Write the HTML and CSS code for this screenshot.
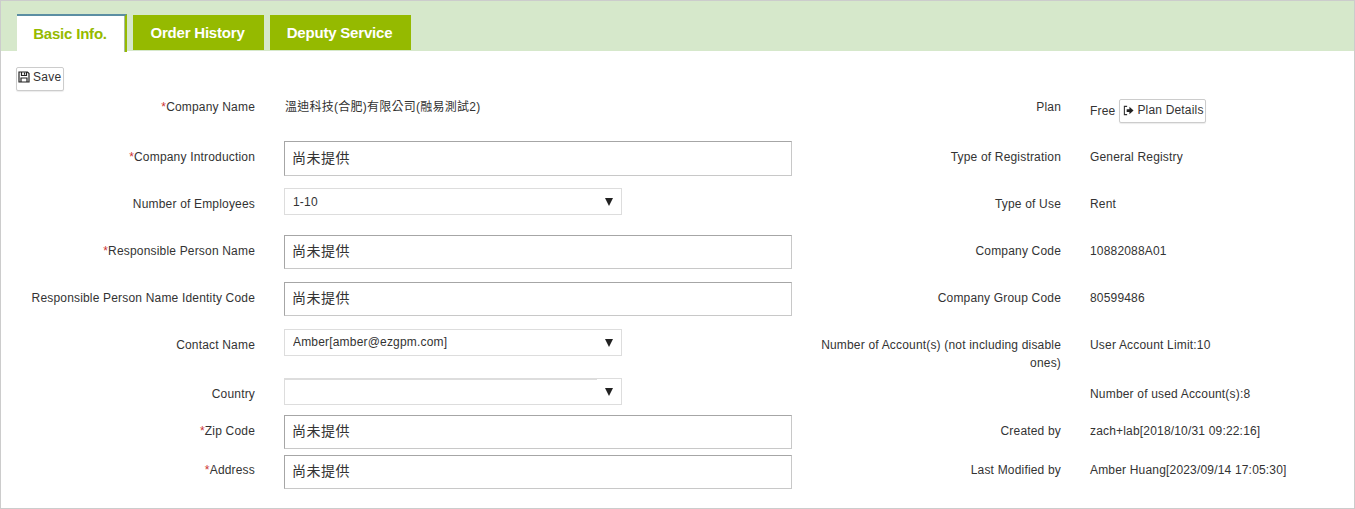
FILE: index.html
```html
<!DOCTYPE html>
<html lang="en">
<head>
<meta charset="utf-8">
<title>Basic Info.</title>
<link rel="stylesheet" href="styles.css">
</head>
<body>
<div class="page">
  <nav class="tabs">
    <a class="tab active">Basic Info.</a>
    <a class="tab tab-order">Order History</a>
    <a class="tab tab-deputy">Deputy Service</a>
  </nav>
  <div class="toolbar">
    <button class="btn save" type="button">
      <svg class="ico" viewBox="0 0 12 12" width="12" height="12"><path d="M1 1h8.500L11 2.500V11H1z M3.500 1v3.500h5V1 M6.500 1.800v2 M3 11V7h6v4" fill="none" stroke="#222" stroke-width="1.200"/></svg>
      Save
    </button>
  </div>
  <form class="form">
    <div class="lbl"><i>*</i>Company Name</div>
    <div class="val cjk-val">溫迪科技(合肥)有限公司(融易測試2)</div>
    <div class="lbl">Plan</div>
    <div class="val plan"><span>Free</span>
      <button class="btn details" type="button">
        <svg class="ico" viewBox="0 0 12 12" width="11" height="11"><path d="M4.500 1.500H1.500v9h3" fill="none" stroke="#333" stroke-width="1.200"/><path d="M4 4.500h3V2l4.500 4L7 10V7.500H4z" fill="#222"/></svg>
        Plan Details
      </button>
    </div>

    <div class="lbl"><i>*</i>Company Introduction</div>
    <div class="ctl"><input class="txt tall" value="尚未提供"></div>
    <div class="lbl">Type of Registration</div>
    <div class="val">General Registry</div>

    <div class="lbl">Number of Employees</div>
    <div class="ctl sel"><select class="sel-num"><option>1-10</option></select></div>
    <div class="lbl">Type of Use</div>
    <div class="val">Rent</div>

    <div class="lbl"><i>*</i>Responsible Person Name</div>
    <div class="ctl"><input class="txt" value="尚未提供"></div>
    <div class="lbl">Company Code</div>
    <div class="val">10882088A01</div>

    <div class="lbl">Responsible Person Name Identity Code</div>
    <div class="ctl"><input class="txt" value="尚未提供"></div>
    <div class="lbl">Company Group Code</div>
    <div class="val">80599486</div>

    <div class="lbl">Contact Name</div>
    <div class="ctl sel"><select><option>Amber[amber@ezgpm.com]</option></select></div>
    <div class="lbl">Number of Account(s) (not including disable ones)</div>
    <div class="val">User Account Limit:10</div>

    <div class="lbl">Country</div>
    <div class="ctl sel sel-empty"><select><option></option></select></div>
    <div class="lbl"></div>
    <div class="val">Number of used Account(s):8</div>

    <div class="lbl"><i>*</i>Zip Code</div>
    <div class="ctl"><input class="txt" value="尚未提供"></div>
    <div class="lbl">Created by</div>
    <div class="val">zach+lab[2018/10/31 09:22:16]</div>

    <div class="lbl last"><i>*</i>Address</div>
    <div class="ctl"><input class="txt" value="尚未提供"></div>
    <div class="lbl last">Last Modified by</div>
    <div class="val last">Amber Huang[2023/09/14 17:05:30]</div>
  </form>
</div>
</body>
</html>
```
FILE: styles.css
```css
* { box-sizing: border-box; }
html, body { margin: 0; padding: 0; background: #fff; }
body {
  font-family: "Liberation Sans", "Noto Sans CJK TC", sans-serif;
  font-size: 12px;
  line-height: 18px;
  letter-spacing: 0.18px;
  color: #333;
}
.page {
  width: 1355px;
  height: 509px;
  border: 1px solid #ccc;
  overflow: hidden;
}
.tabs {
  display: flex;
  align-items: flex-start;
  height: 50px;
  padding: 14px 0 0 16px;
  background: #d6e8cb;
}
.tab {
  display: block;
  height: 35px;
  margin-right: 6px;
  background: #95ba00;
  color: #fff;
  font-size: 15px;
  font-weight: 700;
  letter-spacing: -0.2px;
  line-height: 35px;
  text-align: center;
  padding-right: 2px;
}
.tab.active {
  width: 110px;
  height: 38px;
  margin-top: -1px;
  margin-right: 6px;
  background: #fff;
  color: #95ba00;
  border-top: 2px solid #5b8ea3;
  border-right: 2px solid #95ba00;
  box-shadow: inset -1px 0 0 #a9b9a0;
  line-height: 36px;
}
.tab-order { width: 131px; }
.tab-deputy { width: 141px; }
.toolbar {
  display: flex;
  height: 40px;
  padding: 16px 0 0 15px;
}
.btn {
  display: inline-flex;
  align-items: center;
  gap: 3px;
  height: 24px;
  padding: 0 2px 2px;
  background: #fff;
  border: 1px solid #ccc;
  border-radius: 2px;
  box-shadow: 0 1px 1px rgba(0,0,0,.08);
  font: inherit;
  letter-spacing: inherit;
  white-space: nowrap;
  color: #333;
}
.save { width: 48px; padding: 0 0 4px 1px; gap: 3px; letter-spacing: 0.3px; }
.details { width: 87px; padding: 0 0 2px 3px; gap: 3px; }
.ico { flex: none; }
.form {
  display: grid;
  grid-template-columns: 254px 536px 270px 1fr;
  grid-template-rows: 50px 47px 47px 47px 47px 49px 37px 40px 40px;
}
.lbl {
  padding-top: 7px;
  text-align: right;
}
.lbl.last, .val.last { padding-top: 6px; }
.lbl i { font-style: normal; color: #c33; }
.val { padding: 7px 0 0 29px; }
.val.plan {
  display: flex;
  align-items: center;
  align-self: start;
  gap: 4px;
  padding-top: 8px;
}
.ctl { padding-left: 29px; }
.cjk-val { padding-left: 30px; letter-spacing: 0.25px; }
.txt {
  display: block;
  width: 508px;
  height: 34px;
  padding: 0 7px 4px;
  border: 1px solid #c8c8c8;
  border-top-color: #a6a6a6;
  border-left-color: #a6a6a6;
  background: #fff;
  font-family: inherit;
  font-size: 14px;
  letter-spacing: 0.5px;
  color: #333;
  outline: none;
}
.txt.tall { height: 35px; }
.sel {
  position: relative;
}
.sel select {
  display: block;
  appearance: none;
  width: 338px;
  height: 27px;
  padding: 0 8px 2px;
  border: 1px solid #ddd;
  border-radius: 0;
  background: #fff;
  font: inherit;
  letter-spacing: inherit;
  color: #333;
  outline: none;
}
.sel select.sel-num { padding-bottom: 0; }
.sel::after {
  content: "";
  position: absolute;
  top: 10px;
  left: 349.500px;
  border-style: solid;
  border-width: 8px 4.500px 0;
  border-color: #222 transparent transparent;
}
.sel-empty::before {
  content: "";
  position: absolute;
  top: 0;
  left: 29px;
  width: 313px;
  height: 2px;
  background: #ddd;
}
```
